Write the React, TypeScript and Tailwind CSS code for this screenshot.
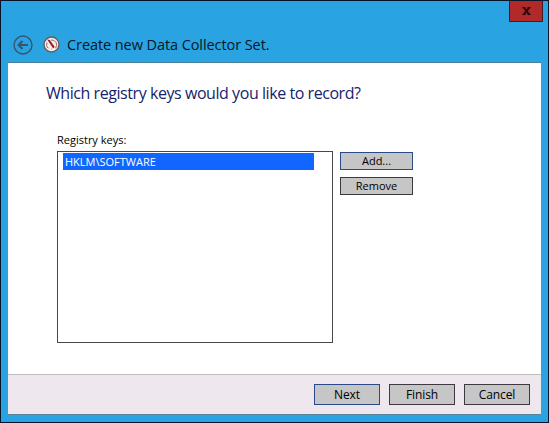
import type { ReactNode } from 'react';

function BackIcon() {
  return (
    <svg width="20" height="20" viewBox="0 0 20 20" fill="none" stroke="#34566e">
      <circle cx="10" cy="10" r="9" strokeWidth="1.4" />
      <path d="M15 10H6M9.5 6L5.5 10l4 4" strokeWidth="2" />
    </svg>
  );
}

function GaugeIcon() {
  return (
    <svg width="17" height="17" viewBox="0 0 17 17" fill="none">
      <circle cx="8.5" cy="8.5" r="7.5" fill="#f3efed" stroke="#655b5c" strokeWidth="1.3" />
      <path d="M5.2 12.3A5 5 0 0 1 4 6.5M8 4a5 5 0 0 1 4.5 8.2" stroke="#8b6b69" strokeWidth="1" />
      <path d="M4.2 3.4L6.8 3.9l5 7.1-1.8 1.3z" fill="#a01820" />
      <path d="M8 13h1" stroke="#c79490" />
    </svg>
  );
}

function FooterButton({ children, primary = false }: { children: ReactNode; primary?: boolean }) {
  return (
    <button className={`h-[21px] w-[66px] border bg-[#c6c6c6] text-center text-[12px] leading-[19px] tracking-[-0.1px] ${primary ? 'border-[#294a86]' : 'border-[#3c3a40]'}`}>
      {children}
    </button>
  );
}

function SideButton({ children, primary = false }: { children: ReactNode; primary?: boolean }) {
  return (
    <button className={`h-[18px] w-[73px] border bg-[#c6c6c6] text-center text-[11px] leading-[16px] ${primary ? 'border-[#294a86]' : 'border-[#3c3a40]'}`}>
      {children}
    </button>
  );
}

export default function App() {
  return (
    <main className="flex h-[423px] w-[549px] flex-col border border-[#071326] bg-[#2aa3e3] px-[7px] pb-[7px] font-['Open_Sans','Noto_Sans',sans-serif] text-black">
      <header className="flex h-[62px] shrink-0 flex-col">
        <div className="-mr-[2px] flex h-[21px] justify-end">
          <button className="flex h-[21px] w-[34px] items-center justify-center border border-t-0 border-[#401c2b] bg-[#b22929]" aria-label="Close">
            <svg width="9" height="8" viewBox="0 0 9 8" fill="none" stroke="#28050b">
              <path d="M2 .8l5 6.4M7 .8L2 7.2" strokeWidth="1.9" />
              <path d="M.5.7h3M5.5.7h3M.5 7.3h3M5.5 7.3h3" strokeWidth="1.2" />
            </svg>
          </button>
        </div>
        <div className="flex h-[41px] items-center border-b border-[#477e99] pl-[5px] pt-[5px]">
          <BackIcon />
          <div className="ml-[10px]"><GaugeIcon /></div>
          <h1 className="ml-[7px] whitespace-nowrap text-[14.5px] leading-5 tracking-[-0.08px] text-[#071724]">Create new Data Collector Set.</h1>
        </div>
      </header>
      <section className="flex h-[311px] shrink-0 flex-col bg-white px-[38px] pt-[18px]">
        <h2 className="whitespace-nowrap text-[16px] leading-6 tracking-[-0.44px] text-[#15246b]">Which registry keys would you like to record?</h2>
        <div className="mt-[27px] pl-[11px]">
          <div className="h-[19px] text-[11px] leading-4">Registry keys:</div>
          <div className="flex">
            <div className="h-[192px] w-[276px] border border-[#46464b] bg-white pl-[5px] pt-px">
              <div className="h-[17px] w-[251px] bg-[#1066ff] pl-[2px] text-[11px] leading-[17px] text-white">HKLM\SOFTWARE</div>
            </div>
            <div className="ml-[7px] flex flex-col gap-[7px] pt-px">
              <SideButton primary>Add...</SideButton>
              <SideButton>Remove</SideButton>
            </div>
          </div>
        </div>
      </section>
      <footer className="flex h-[41px] shrink-0 items-start justify-end gap-[9px] border-b border-t border-b-[#57849a] border-t-[#bdbdbd] bg-[#efe7ee] pr-[11px] pt-[9px]">
        <FooterButton primary>Next</FooterButton>
        <FooterButton>Finish</FooterButton>
        <FooterButton>Cancel</FooterButton>
      </footer>
    </main>
  );
}
